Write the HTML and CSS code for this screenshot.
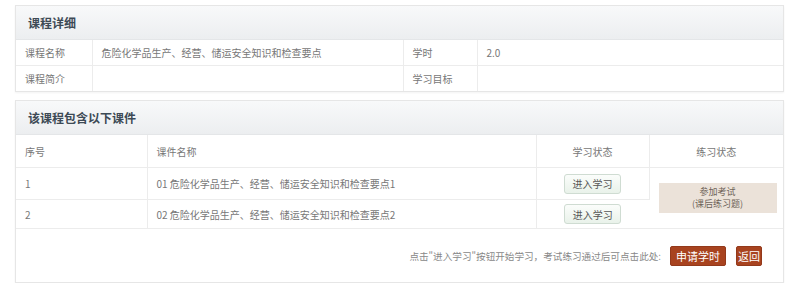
FILE: index.html
```html
<!DOCTYPE html>
<html lang="zh-CN">
  <head>
    <meta charset="UTF-8" />
    <title>课程详细</title>
    <link rel="stylesheet" href="styles.css">
  </head>
  <body>
    <div class="panel info">
      <div class="panelHead">课程详细</div>
      <table class="grid">
        <colgroup>
          <col style="width: 76px" />
          <col style="width: 311px" />
          <col style="width: 74px" />
          <col />
        </colgroup>
        <tr>
          <td>课程名称</td>
          <td>危险化学品生产、经营、储运安全知识和检查要点</td>
          <td class="soft">学时</td>
          <td>2.0</td>
        </tr>
        <tr>
          <td>课程简介</td>
          <td></td>
          <td class="soft">学习目标</td>
          <td></td>
        </tr>
      </table>
    </div>

    <div class="panel list">
      <div class="panelHead">该课程包含以下课件</div>
      <table class="grid">
        <colgroup>
          <col style="width: 131px" />
          <col style="width: 389px" />
          <col style="width: 113px" />
          <col />
        </colgroup>
        <tr class="headRow">
          <td>序号</td>
          <td>课件名称</td>
          <td class="center">学习状态</td>
          <td class="center">练习状态</td>
        </tr>
        <tr class="row1">
          <td>1</td>
          <td>01 危险化学品生产、经营、储运安全知识和检查要点1</td>
          <td class="center"><button class="studyBtn">进入学习</button></td>
          <td class="center" rowspan="2">
            <div class="examBox">参加考试<br />(课后练习题)</div>
          </td>
        </tr>
        <tr class="row2">
          <td>2</td>
          <td>02 危险化学品生产、经营、储运安全知识和检查要点2</td>
          <td class="center"><button class="studyBtn">进入学习</button></td>
        </tr>
      </table>
      <div class="footer">
        <span class="tip">点击"进入学习"按钮开始学习，考试练习通过后可点击此处:</span>
        <button class="redBtn">申请学时</button>
        <button class="redBtn back">返回</button>
      </div>
    </div>
  </body>
</html>
```

FILE: styles.css
```css
body {
  margin: 0;
  padding: 5px 16px 0 15px;
  background: #fff;
  font-family: "Noto Sans CJK SC", "Microsoft YaHei", sans-serif;
  font-size: 10px;
  color: #777;
}
.panel {
  border: 1px solid #e6e6e6;
  box-shadow: 0 1px 2px rgba(0, 0, 0, 0.05);
  background: #fff;
}
.list {
  margin-top: 8px;
}
.panelHead {
  height: 33px;
  line-height: 33px;
  padding-left: 12px;
  font-size: 12px;
  font-weight: bold;
  color: #3d4a55;
  background: linear-gradient(#f8f9fa, #eceef0);
  border-bottom: 1px solid #e4e6e8;
}
.grid {
  width: 100%;
  border-collapse: collapse;
  table-layout: fixed;
}
.grid td {
  height: 25px;
  padding: 0 9px;
  border-right: 1px solid #ececec;
  border-bottom: 1px solid #ececec;
  white-space: nowrap;
}
.grid td:last-child {
  border-right: none;
}
.info .grid tr:last-child td {
  border-bottom: none;
}
.grid td.soft {
  border-left: 1px solid #f4f4f4;
}
.center {
  text-align: center;
}
.headRow td {
  height: 32px;
}
.row1 td {
  height: 31px;
}
.row2 td {
  height: 28px;
}
.studyBtn {
  width: 57px;
  height: 20px;
  padding: 0;
  border: 1px solid #cfdcd2;
  border-radius: 3px;
  background: linear-gradient(#fbfdfb, #e9f2ea);
  font-family: inherit;
  font-size: 10px;
  color: #555;
}
.examBox {
  width: 118px;
  margin: 0 auto;
  padding: 3px 0;
  line-height: 12px;
  background: #ebe2d9;
  font-size: 9px;
  color: #6e6258;
}
.footer {
  height: 53px;
  display: flex;
  align-items: center;
  justify-content: flex-end;
  padding-right: 21px;
}
.tip {
  margin-right: 9px;
  font-size: 9.6px;
  color: #888;
}
.redBtn {
  height: 20px;
  padding: 0 5px;
  border: 1px solid #93391b;
  border-radius: 2px;
  background: #a8431f;
  color: #fff;
  font-family: inherit;
  font-size: 11px;
}
.back {
  margin-left: 10px;
  padding: 0 1px;
}
```
